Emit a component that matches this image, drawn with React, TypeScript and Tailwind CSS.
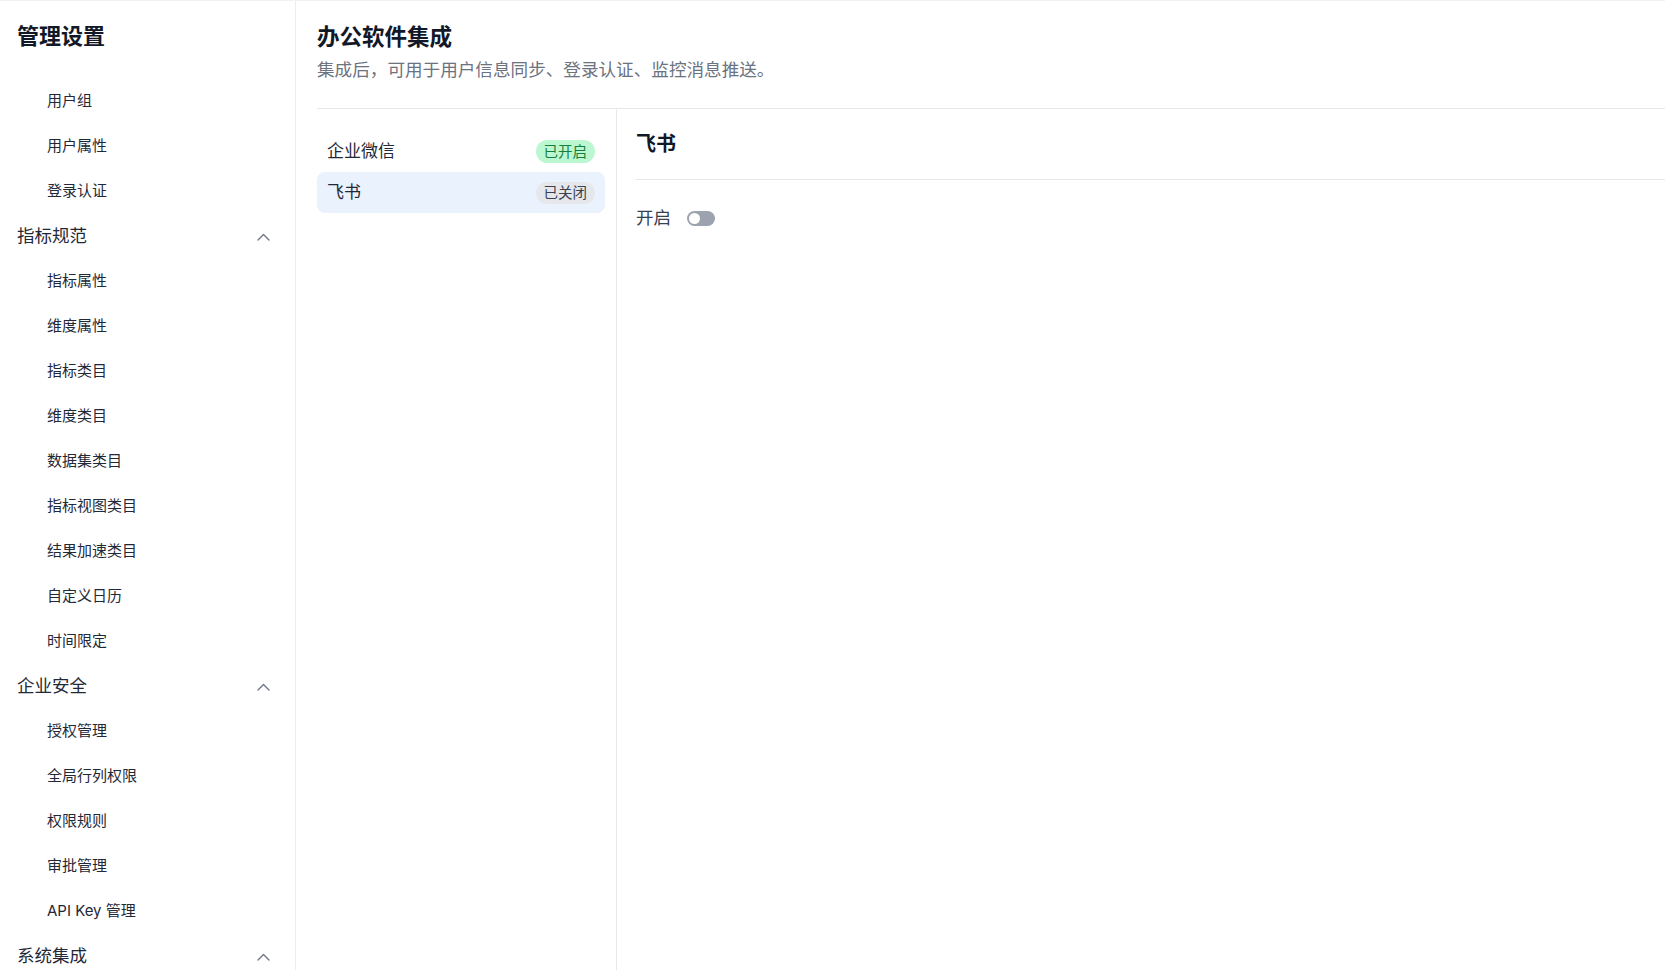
import React from "react";

const font = { fontFamily: 'Inter, "Noto Sans CJK SC", "Noto Sans", sans-serif' };

type NavEntry = { type: "item" | "group"; label: string };

const nav: NavEntry[] = [
  { type: "item", label: "用户组" },
  { type: "item", label: "用户属性" },
  { type: "item", label: "登录认证" },
  { type: "group", label: "指标规范" },
  { type: "item", label: "指标属性" },
  { type: "item", label: "维度属性" },
  { type: "item", label: "指标类目" },
  { type: "item", label: "维度类目" },
  { type: "item", label: "数据集类目" },
  { type: "item", label: "指标视图类目" },
  { type: "item", label: "结果加速类目" },
  { type: "item", label: "自定义日历" },
  { type: "item", label: "时间限定" },
  { type: "group", label: "企业安全" },
  { type: "item", label: "授权管理" },
  { type: "item", label: "全局行列权限" },
  { type: "item", label: "权限规则" },
  { type: "item", label: "审批管理" },
  { type: "item", label: "API Key 管理" },
  { type: "group", label: "系统集成" },
];

function ChevronUp() {
  return (
    <svg width="13" height="8" viewBox="0 0 13 8" fill="none">
      <path d="M1 7L6.5 1.5L12 7" stroke="#6b7280" strokeWidth="1.3" strokeLinecap="round" strokeLinejoin="round" />
    </svg>
  );
}

export default function App() {
  return (
    <div className="w-[1665px] h-[970px] overflow-hidden bg-white flex border-t border-[#f1f2f4]" style={font}>
      <aside className="w-[296px] shrink-0 h-full border-r border-[#eceef1] overflow-hidden">
        <div className="h-[71px] flex items-center pl-[17px] text-[22px] font-bold text-[#111827]">管理设置</div>
        <div className="mt-[7px]">
          {nav.map((n) =>
            n.type === "item" ? (
              <div key={n.label} className="h-[45px] flex items-center pl-[47px] text-[15px] text-[#1f2937]">
                {n.label}
              </div>
            ) : (
              <div key={n.label} className="h-[45px] flex items-center justify-between pl-[17px] pr-[25px] text-[17.5px] text-[#1f2937]">
                <span>{n.label}</span>
                <ChevronUp />
              </div>
            )
          )}
        </div>
      </aside>
      <main className="flex-1 flex flex-col pl-[21px] min-w-0">
        <div className="pt-[21px]">
          <div className="h-[30px] flex items-center text-[22.5px] font-bold text-[#111827]">办公软件集成</div>
          <div className="mt-[5px] h-[26px] flex items-center text-[17.6px] text-[#6b7280]">
            集成后，可用于用户信息同步、登录认证、监控消息推送。
          </div>
        </div>
        <div className="mt-[25px] flex-1 flex border-t border-[#e5e7eb]">
          <div className="w-[300px] shrink-0 border-r border-[#e8e9ec] pr-[11px] pt-[22px]">
            <div className="h-[41px] rounded-lg px-[10px] flex items-center justify-between">
              <span className="text-[17px] text-[#1f2937]">企业微信</span>
              <span className="h-[23px] px-[8px] rounded-full bg-[#bbf7d0] text-[#15803d] text-[14.5px] flex items-center">已开启</span>
            </div>
            <div className="h-[41px] rounded-lg px-[10px] flex items-center justify-between bg-[#eaf2fd]">
              <span className="text-[17px] text-[#1f2937]">飞书</span>
              <span className="h-[22px] px-[8px] rounded-full bg-[#e5e7eb] text-[#374151] text-[14.5px] flex items-center">已关闭</span>
            </div>
          </div>
          <div className="flex-1 min-w-0">
            <div className="ml-[19px] h-[71px] flex items-center border-b border-[#e5e7eb] text-[20px] font-semibold text-[#111827]">
              飞书
            </div>
            <div className="ml-[19px] mt-[25px] h-[26px] flex items-center gap-[16px]">
              <span className="text-[17.5px] text-[#374151]">开启</span>
              <span className="relative w-[28px] h-[15px] rounded-full bg-[#9ca3af] inline-block">
                <span className="absolute left-[2px] top-[2px] w-[11px] h-[11px] rounded-full bg-white" />
              </span>
            </div>
          </div>
        </div>
      </main>
    </div>
  );
}
